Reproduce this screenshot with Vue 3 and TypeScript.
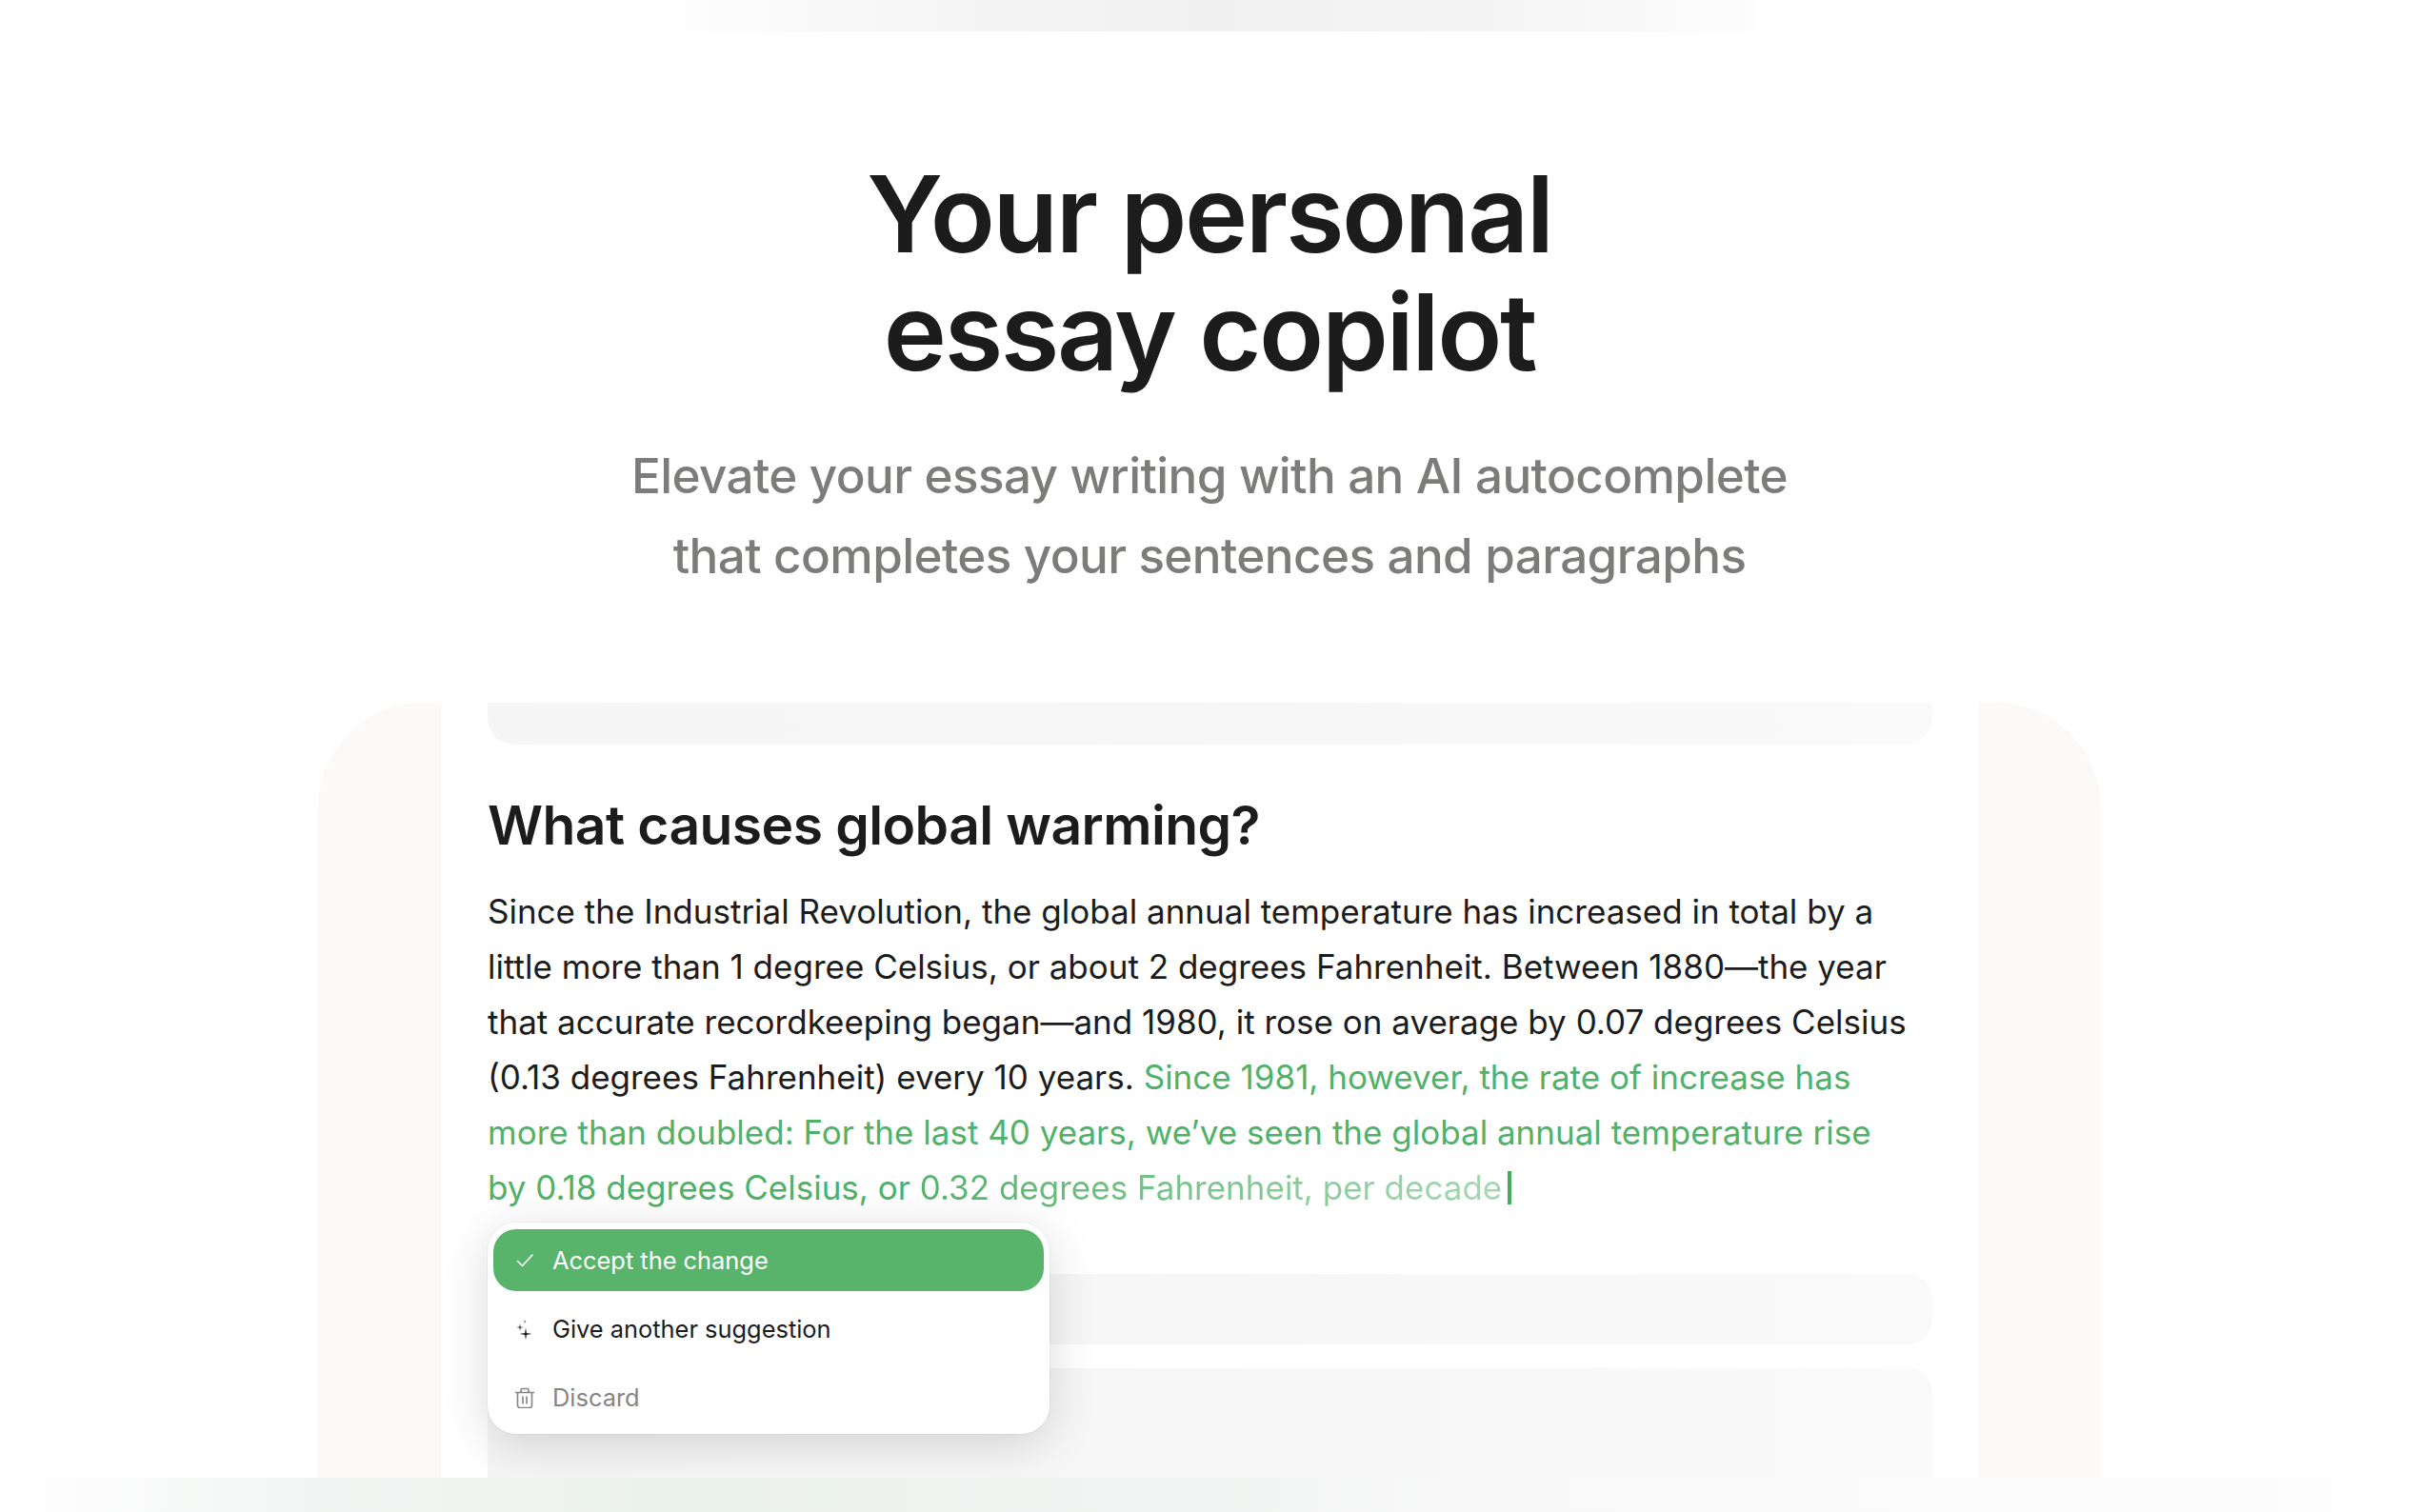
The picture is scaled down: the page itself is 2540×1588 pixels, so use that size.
<script setup lang="ts">
interface Action {
  label: string
  kind: 'accept' | 'suggest' | 'discard'
}
const actions: Action[] = [
  { label: 'Accept the change', kind: 'accept' },
  { label: 'Give another suggestion', kind: 'suggest' },
  { label: 'Discard', kind: 'discard' },
]
</script>

<template>
  <div class="page">
    <div class="top-band"></div>
    <header class="hero">
      <h1>Your personal<br />essay copilot</h1>
      <p class="sub">Elevate your essay writing with an AI autocomplete<br />that completes your sentences and paragraphs</p>
    </header>
    <section class="frame">
      <div class="sheet">
        <div class="skel skel-top"></div>
        <h2>What causes global warming?</h2>
        <p class="body">
          Since the Industrial Revolution, the global annual temperature has increased in total by a little more than 1 degree Celsius, or about 2 degrees Fahrenheit. Between 1880—the year that accurate recordkeeping began—and 1980, it rose on average by 0.07 degrees Celsius (0.13 degrees Fahrenheit) every 10 years.
          <span class="green">Since 1981, however, the rate of increase has more than doubled: For the last 40 years, we’ve seen the global annual temperature rise by 0.18 degrees Celsius, or </span><span class="fade">0.32 degrees Fahrenheit, per decade</span><span class="caret"></span>
        </p>
        <div class="skel skel-mid"></div>
        <div class="skel skel-low"></div>
        <div class="menu">
          <div v-for="a in actions" :key="a.kind" class="item" :class="a.kind">
            <svg v-if="a.kind === 'accept'" class="icon" viewBox="0 0 22 22" fill="none" stroke="currentColor" stroke-width="1.6" stroke-linecap="round" stroke-linejoin="round">
              <path d="M3.500 11.500l5 5L19 5" />
            </svg>
            <svg v-else-if="a.kind === 'suggest'" class="icon" viewBox="0 0 22 22" fill="currentColor">
              <path d="M12 9.500l.9 5.600 5.600.9-5.600.9-.9 5.600-.9-5.600-5.600-.9 5.600-.9z" />
              <path d="M6 5l.55 3.450L10 9l-3.450.55L6 13l-.55-3.450L2 9l3.450-.55z" />
              <path d="M11 1l.3 1.700 1.700.3-1.700.3-.3 1.700-.3-1.700L9 3l1.700-.3z" />
            </svg>
            <svg v-else class="icon" viewBox="0 0 22 22" fill="none" stroke="currentColor" stroke-width="1.6" stroke-linecap="round" stroke-linejoin="round">
              <path d="M1.500 5.500h19M7 5.500V3a1.500 1.500 0 0 1 1.500-1.500h5A1.500 1.500 0 0 1 15 3v2.500M3.500 5.500V19A2.500 2.500 0 0 0 6 21.500h10a2.500 2.500 0 0 0 2.500-2.500V5.500M9 10v7M13 10v7" />
            </svg>
            <span>{{ a.label }}</span>
          </div>
        </div>
      </div>
    </section>
    <div class="bottom-band"></div>
  </div>
</template>

<style>
html, body { margin: 0; background: #fff; }
</style>

<style scoped>
.page {
  width: 2540px;
  height: 1588px;
  overflow: hidden;
  display: flex;
  flex-direction: column;
  background: #fff;
  font-family: Inter, "Liberation Sans", sans-serif;
}
.top-band {
  height: 33px;
  flex: none;
  background: linear-gradient(90deg, #fff 27%, #fafafa 32%, #f5f5f5 40%, #f0f0f0 50%, #f5f5f5 62%, #fcfcfc 72%, #fff 73%);
}
.hero {
  flex: none;
  height: 705px;
  box-sizing: border-box;
  padding-top: 129px;
  text-align: center;
}
h1 {
  margin: 0;
  font-size: 112px;
  line-height: 124px;
  font-weight: 600;
  letter-spacing: -2.4px;
  color: #1c1c1c;
}
.sub {
  margin: 47px 0 0;
  font-size: 51.2px;
  line-height: 84px;
  font-weight: 500;
  letter-spacing: -0.6px;
  color: #7c7c7a;
}
.frame {
  flex: none;
  width: 1872px;
  height: 814px;
  margin-left: 334px;
  display: flex;
  justify-content: center;
  background: #fbfaf9;
  border-radius: 110px 110px 0 0;
}
.sheet {
  position: relative;
  width: 1614px;
  box-sizing: border-box;
  padding: 0 48px 0 49px;
  background: #fff;
  overflow: hidden;
}
.skel {
  background: linear-gradient(90deg, #f5f5f5, #f7f7f7 60%, #fafafa);
}
.skel-top {
  height: 44px;
  border-radius: 0 0 28px 28px;
}
h2 {
  margin: 45px 0 0;
  font-size: 57px;
  line-height: 80px;
  font-weight: 600;
  letter-spacing: -0.6px;
  color: #1c1c1c;
}
.body {
  margin: 21px 0 0;
  max-width: 1495px;
  font-size: 35px;
  line-height: 58px;
  font-weight: 400;
  color: #1c1c1c;
}
.green { color: #50b168; }
.fade {
  background: linear-gradient(90deg, #55b36c, #a4d8b1);
  -webkit-background-clip: text;
  background-clip: text;
  color: transparent;
}
.caret {
  display: inline-block;
  width: 4px;
  height: 35px;
  margin-left: 6px;
  vertical-align: -5px;
  background: #42ad5f;
}
.skel-mid {
  height: 74px;
  margin-top: 62px;
  border-radius: 26px;
}
.skel-low {
  height: 130px;
  margin-top: 25px;
  border-radius: 26px 26px 0 0;
}
.menu {
  position: absolute;
  left: 49px;
  top: 546px;
  width: 590px;
  height: 222px;
  box-sizing: border-box;
  padding: 7px 6px;
  display: flex;
  flex-direction: column;
  background: #fff;
  border-radius: 30px;
  box-shadow: 0 0 0 1px rgba(0, 0, 0, 0.03), 0 10px 50px rgba(0, 0, 0, 0.15);
}
.item {
  height: 71px;
  flex: none;
  display: flex;
  align-items: center;
  gap: 18px;
  padding-left: 22px;
  font-size: 25.4px;
  color: #1c1c1c;
}
.item.accept {
  height: 65px;
  margin-bottom: 4px;
  background: #58b46b;
  border-radius: 24px;
  color: #fff;
}
.item.discard {
  margin-top: 1px;
  color: #858585;
}
.icon { width: 22px; height: 22px; flex: none; }
.bottom-band {
  flex: 1;
  background: linear-gradient(90deg, #fff, #f3f6f4 12%, #ebf1ed 28%, #f1f4f2 48%, #f9f9f9 62%, #fbfbfb 90%, #fff);
}
</style>
